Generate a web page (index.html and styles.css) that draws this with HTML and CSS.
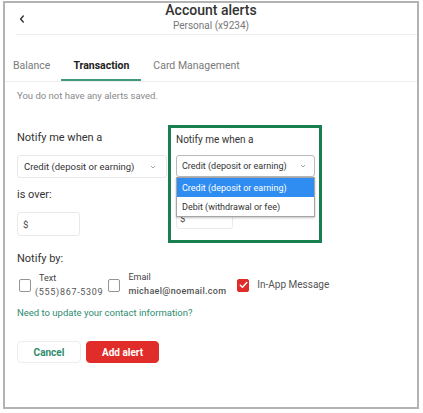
FILE: index.html
```html
<!DOCTYPE html>
<html lang="en">
<head>
<meta charset="utf-8">
<title>Account alerts</title>
<link rel="stylesheet" href="styles.css">
</head>
<body>
<div class="frame">
  <header class="header">
    <div class="back">
      <svg width="6" height="8" viewBox="0 0 6 8"><path d="M4.3 1 L1.6 4 L4.3 7" fill="none" stroke="#333" stroke-width="1.4" stroke-linecap="round" stroke-linejoin="round"/></svg>
    </div>
    <div class="titles">
      <div class="title">Account alerts</div>
      <div class="subtitle">Personal (x9234)</div>
    </div>
    <div></div>
  </header>
  <div class="rule"></div>
  <nav class="tabs">
    <span class="tab first">Balance</span>
    <span class="tab active">Transaction</span>
    <span class="tab">Card Management</span>
  </nav>
  <main class="content">
    <p class="empty">You do not have any alerts saved.</p>
    <div class="label first-label">Notify me when a</div>
    <div class="select">
      <span>Credit (deposit or earning)</span>
      <svg class="chev" width="6" height="4" viewBox="0 0 6 4"><path d="M1 1 L3 3 L5 1" fill="none" stroke="#999" stroke-width="0.9"/></svg>
    </div>
    <div class="label">is over:</div>
    <div class="input">$</div>
    <div class="label notify-label">Notify by:</div>
    <div class="checks">
      <div class="check-item">
        <span class="box"></span>
        <div class="check-text">
          <span class="check-title indent">Text</span>
          <span class="check-value">(555)867-5309</span>
        </div>
      </div>
      <div class="check-item item-email">
        <span class="box"></span>
        <div class="check-text email-text">
          <span class="check-title">Email</span>
          <span class="check-value email">michael@noemail.com</span>
        </div>
      </div>
      <div class="check-item item-app">
        <span class="box checked">
          <svg width="9" height="8" viewBox="0 0 9 8"><path d="M1.3 4.2 L3.5 6.3 L7.8 1.5" fill="none" stroke="#fff" stroke-width="1.5" stroke-linecap="round" stroke-linejoin="round"/></svg>
        </span>
        <span class="app-label">In-App Message</span>
      </div>
    </div>
    <a class="link" href="#">Need to update your contact information?</a>
    <div class="buttons">
      <button class="btn cancel">Cancel</button>
      <button class="btn add">Add alert</button>
    </div>
  </main>

  <div class="callout">
    <div class="callout-label">Notify me when a</div>
    <div class="callout-select">
      <span>Credit (deposit or earning)</span>
      <svg class="chev" width="6" height="4" viewBox="0 0 6 4"><path d="M1 1 L3 3 L5 1" fill="none" stroke="#999" stroke-width="0.9"/></svg>
      <ul class="dropdown">
        <li class="option selected">Credit (deposit or earning)</li>
        <li class="option">Debit (withdrawal or fee)</li>
      </ul>
    </div>
    <div class="callout-input">$</div>
  </div>
</div>
</body>
</html>
```

FILE: styles.css
```css
* { box-sizing: border-box; }

html, body {
  margin: 0;
  padding: 0;
  background: #fff;
}

body {
  font-family: Roboto, "Liberation Sans", Arial, sans-serif;
  color: #333;
}

.frame {
  position: relative;
  margin: 1px 0 0 3px;
  width: 416px;
  height: 408px;
  border: 2px solid #b3b3b3;
  overflow: hidden;
  background: #fff;
}

/* header */
.header {
  display: grid;
  grid-template-columns: 1fr auto 1fr;
  padding-bottom: 2px;
}

.back {
  align-self: center;
  padding-left: 14px;
  margin-top: 2px;
  display: flex;
}

.titles {
  text-align: center;
}

.title {
  font-size: 14px;
  line-height: 15px;
  font-weight: 500;
  color: #333;
}

.subtitle {
  margin-top: 2px;
  font-size: 10px;
  line-height: 12px;
  color: #777;
}

.rule {
  margin-left: 11px;
  height: 1px;
  background: #eeeeee;
}

/* tabs */
.tabs {
  display: flex;
  padding-top: 24px;
  border-bottom: 1px solid #eeeeee;
}

.tab {
  font-size: 10.5px;
  line-height: 14px;
  padding: 0 12px 6px;
  border-bottom: 2px solid transparent;
  color: #7a7a7a;
  white-space: nowrap;
}

.tab.first {
  margin-left: 8px;
  padding-left: 0;
  padding-right: 11px;
}

.tab.active {
  color: #222;
  font-weight: 700;
  border-bottom-color: #3d9b7b;
}

/* content */
.content {
  padding: 0 12px;
}

.empty {
  margin: 8px 0 0;
  font-size: 9.5px;
  line-height: 12px;
  color: #8a8a8a;
}

.label {
  margin-top: 10px;
  font-size: 11px;
  line-height: 14px;
  color: #333;
}

.label.first-label {
  margin-top: 29px;
}

.label.notify-label {
  margin-top: 16px;
}

.select {
  margin-top: 10px;
  width: 150px;
  height: 23px;
  border: 1px solid #e8e8e8;
  border-radius: 3px;
  display: flex;
  align-items: center;
  justify-content: space-between;
  padding: 0 10px 0 6px;
  font-size: 9.5px;
  color: #333;
}

.input {
  margin-top: 10px;
  width: 63px;
  height: 24px;
  border: 1px solid #eaeaea;
  border-radius: 3px;
  display: flex;
  align-items: center;
  padding-left: 5px;
  font-size: 9.5px;
  color: #444;
}

/* checkboxes */
.checks {
  margin-top: 6px;
  display: flex;
  align-items: flex-start;
}

.check-item {
  display: flex;
  align-items: flex-start;
}

.box {
  width: 12px;
  height: 13px;
  border: 1.5px solid #949494;
  border-radius: 2px;
  margin-top: 7px;
  margin-left: 2px;
  background: #fff;
  flex: none;
}

.check-text {
  display: flex;
  flex-direction: column;
  gap: 2px;
  margin-left: 4px;
}

.check-title {
  font-size: 9px;
  line-height: 12px;
  color: #444;
}

.check-title.indent {
  padding-left: 4px;
}

.check-value {
  font-size: 9px;
  line-height: 12px;
  color: #555;
  letter-spacing: 0.7px;
}

.check-value.email {
  letter-spacing: 0.3px;
  font-weight: 500;
}

.item-email {
  margin-left: 3px;
}

.email-text {
  margin-left: 8px;
  margin-top: -1px;
}

.item-app {
  align-self: center;
  align-items: center;
  margin-left: 9px;
}

.box.checked {
  margin-top: 0;
  background: #e02b2b;
  border-color: #e02b2b;
  display: flex;
  align-items: center;
  justify-content: center;
}

.app-label {
  margin-left: 8px;
  font-size: 10px;
  line-height: 12px;
  color: #555;
}

.link {
  display: block;
  margin-top: 9px;
  font-size: 9.5px;
  line-height: 12px;
  color: #2e8c6f;
  text-decoration: none;
}

.buttons {
  margin-top: 22px;
  display: flex;
  gap: 5px;
}

.btn {
  height: 22px;
  border-radius: 4px;
  font-family: inherit;
  font-size: 10px;
  font-weight: 700;
  padding: 0;
  cursor: pointer;
}

.btn.cancel {
  width: 64px;
  background: #fff;
  border: 1px solid #ececec;
  color: #2e8c6f;
}

.btn.add {
  width: 73px;
  background: #e02d29;
  border: 1px solid #e02d29;
  color: #fff;
}

/* highlighted callout */
.callout {
  position: absolute;
  left: 163px;
  top: 122px;
  width: 154px;
  height: 118px;
  border: 3px solid #17804e;
  background: #fff;
  padding: 5px 5px 0 5px;
}

.callout-label {
  font-size: 10px;
  line-height: 13px;
  color: #333;
}

.callout-select {
  position: relative;
  margin-top: 9px;
  width: 139px;
  height: 22px;
  border: 1px solid #b9b9b9;
  border-radius: 3px;
  display: flex;
  align-items: center;
  justify-content: space-between;
  padding: 0 8px 0 5px;
  font-size: 9px;
  color: #333;
}

.dropdown {
  position: absolute;
  left: -1px;
  top: 21px;
  width: 139px;
  margin: 0;
  padding: 0;
  list-style: none;
  background: #fff;
  border: 1px solid #a5a5a5;
  box-shadow: 0 1px 2px rgba(0, 0, 0, 0.25);
  z-index: 2;
}

.option {
  height: 19px;
  display: flex;
  align-items: center;
  padding-left: 5px;
  font-size: 9px;
  color: #333;
}

.option.selected {
  background: #2f8cf0;
  color: #fff;
}

.callout-input {
  margin-top: 28px;
  width: 57px;
  height: 24px;
  border: 1px solid #eaeaea;
  border-radius: 3px;
  display: flex;
  align-items: flex-end;
  padding: 0 0 4px 3px;
  font-size: 9.5px;
  color: #444;
}
```
